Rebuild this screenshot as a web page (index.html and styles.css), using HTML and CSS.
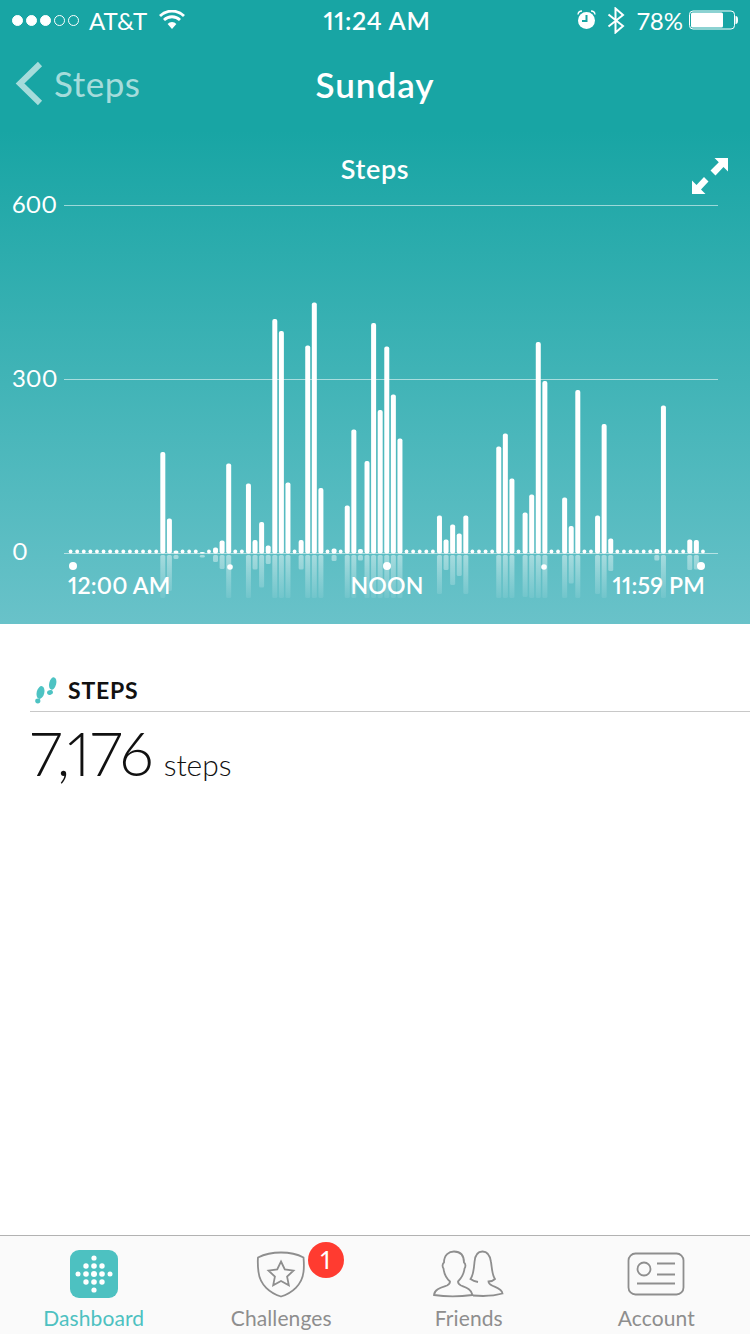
FILE: index.html
```html
<!DOCTYPE html>
<html>
<head>
    <title>Steps</title>
    <link rel="stylesheet" href="styles.css">
</head>
<body>
    <div class="page">
        <section class="hero">
            <div class="status">
                <div class="status-left">
                    <span class="signal">
                        <i class="dot on"></i><i class="dot on"></i><i class="dot on"></i><i class="dot"></i><i class="dot"></i>
                    </span>
                    <span class="carrier">AT&amp;T</span>
                    <svg class="wifi" width="26" height="20" viewBox="158 10 26 20">
                        <path d="M159 16A17 17 0 0 1 183 16" fill="none" stroke="#fff" stroke-width="2.8"/>
                        <path d="M163 20A11.5 11.5 0 0 1 179 20" fill="none" stroke="#fff" stroke-width="2.8"/>
                        <path d="M166.6 24A6 6 0 0 1 175.4 24L171 29Z" fill="#fff"/>
                    </svg>
                </div>
                <div class="clock">11:24 AM</div>
                <div class="status-right">
                    <svg width="22" height="22" viewBox="576 9 22 22">
                        <circle cx="586.5" cy="20.5" r="8.5" fill="#fff"/>
                        <path d="M586.5 15V21H582" fill="none" stroke="#18a5a4" stroke-width="2"/>
                        <path d="M578 14.5A4 4 0 0 1 582 11M591 11A4 4 0 0 1 595 14.5" fill="none" stroke="#fff" stroke-width="1.4"/>
                    </svg>
                    <svg class="bt" width="18" height="27" viewBox="607 7 18 27">
                        <path d="M608.5 14.5L623 26L615.5 32.5V8.5L623 15L608.5 26.5" fill="none" stroke="#fff" stroke-width="2"/>
                    </svg>
                    <span class="percent">78%</span>
                    <svg width="50" height="20" viewBox="690 10.5 50 20">
                        <rect x="690.5" y="11.5" width="45" height="18" rx="3.5" fill="none" stroke="#fff"/>
                        <rect x="692" y="13" width="32" height="15" rx="1.5" fill="#fff"/>
                        <path d="M736.5 16.5C738.5 16.5 739 18 739 20.5C739 23 738.5 24.5 736.5 24.5Z" fill="#fff"/>
                    </svg>
                </div>
            </div>
            <div class="nav">
                <div class="back">
                    <svg width="28" height="46" viewBox="15 61 28 46">
                        <path d="M40 65L20 84.500L40 104" fill="none" stroke="#a5dcdb" stroke-width="6"/>
                    </svg>
                    <span>Steps</span>
                </div>
                <h1>Sunday</h1>
            </div>
            <div class="chart-title">
                <span>Steps</span>
                <svg class="expand" width="38" height="38" viewBox="691 157 38 38">
                    <path d="M714.500 158H728V171.500L723.500 167L715.500 175.500L710.500 170.500L718.800 162.300Z" fill="#fff"/>
                    <path d="M692 180.500V194H705.500L701 189.500L708.500 181.500L704 177L696.500 185Z" fill="#fff"/>
                </svg>
            </div>
            <svg class="chart" width="750" height="434" viewBox="0 190 750 434">
                <defs>
                    <linearGradient id="fade" gradientUnits="userSpaceOnUse" x1="0" y1="555" x2="0" y2="598">
                        <stop offset="0" stop-color="#fff" stop-opacity=".45"/>
                        <stop offset="1" stop-color="#fff" stop-opacity=".08"/>
                    </linearGradient>
                </defs>
                <line class="grid" x1="64" y1="205.500" x2="718" y2="205.500"/>
                <line class="grid" x1="64" y1="379.500" x2="718" y2="379.500"/>
                <text class="axis" x="12" y="213">600</text>
                <text class="axis" x="12" y="387">300</text>
                <text class="axis" x="12" y="560">0</text>
                <g id="bars"></g>
                <line class="grid" x1="64" y1="553.500" x2="718" y2="553.500"/>
                <circle class="mark" cx="73" cy="566" r="4"/>
                <circle class="mark" cx="230" cy="567" r="2.800"/>
                <circle class="mark" cx="387" cy="566" r="4"/>
                <circle class="mark" cx="544" cy="567" r="2.800"/>
                <circle class="mark" cx="701" cy="566" r="4"/>
                <text class="time" x="68" y="594">12:00 AM</text>
                <text class="time middle" x="387" y="594">NOON</text>
                <text class="time end" x="705" y="594">11:59 PM</text>
            </svg>
        </section>

        <main class="summary">
            <div class="summary-head">
                <svg width="24" height="30" viewBox="35 676 24 30">
                    <g fill="#4dc3c3">
                        <ellipse cx="52.700" cy="683.500" rx="3.500" ry="6.300" transform="rotate(14 52.700 683.500)"/>
                        <ellipse cx="50" cy="692.500" rx="3" ry="2.300" transform="rotate(-20 50 692.500)"/>
                        <ellipse cx="40.500" cy="692.500" rx="3.800" ry="6.500" transform="rotate(14 40.500 692.500)"/>
                        <ellipse cx="37.800" cy="701" rx="2.600" ry="2.400"/>
                    </g>
                </svg>
                <span>STEPS</span>
            </div>
            <div class="total"><b>7,176</b> <span>steps</span></div>
        </main>

        <nav class="tabs">
            <a class="tab active">
                <svg width="80" height="50" viewBox="54 1250 80 50">
                    <rect x="70" y="1250" width="48" height="48" rx="9" fill="#4dc1c1"/>
                    <g fill="#fff">
                        <circle cx="94" cy="1258" r="2.600"/>
                        <circle cx="86" cy="1266" r="2.700"/><circle cx="94" cy="1266" r="2.800"/><circle cx="102" cy="1266" r="2.700"/>
                        <circle cx="78" cy="1274" r="2.500"/><circle cx="86" cy="1274" r="2.800"/><circle cx="94" cy="1274" r="3"/><circle cx="102" cy="1274" r="2.800"/><circle cx="110" cy="1274" r="2.500"/>
                        <circle cx="86" cy="1282" r="2.700"/><circle cx="94" cy="1282" r="2.800"/><circle cx="102" cy="1282" r="2.700"/>
                        <circle cx="94" cy="1290" r="2.600"/>
                    </g>
                </svg>
                <span>Dashboard</span>
            </a>
            <a class="tab">
                <svg width="80" height="50" viewBox="242 1250 80 50">
                    <path class="line" d="M259 1257.500C266 1254 274 1252.500 282 1252.500C290 1252.500 298 1254 304.500 1257.500C305 1263 305 1268 304.500 1272C303 1285 293 1293 282 1296.500C271 1293 261 1285 259.500 1272C259 1268 258.500 1263 259 1257.500Z"/>
                    <path class="line" d="M282 1261.500L285.800 1269.500L294.500 1270.600L288.100 1276.600L289.800 1285.200L282 1281L274.200 1285.200L275.900 1276.600L269.500 1270.600L278.200 1269.500Z"/>
                </svg>
                <span>Challenges</span>
                <b class="badge">1</b>
            </a>
            <a class="tab">
                <svg width="80" height="50" viewBox="429 1250 80 50">
                    <path class="line" d="M434 1295C434.500 1289 441 1287.500 447 1285.500C449 1284.500 450 1283 450 1281.500C446 1278 444 1273 443.500 1268.500C442 1266.500 442.500 1263.500 444 1262.500C444 1255 449 1251.500 454 1251.500C460 1251.500 464 1255 464 1262.500C465.500 1263.500 466 1266.500 464.500 1268.500C464 1273 461.500 1278 458 1281.500C458 1283 459 1284.500 461 1285.500C466 1287.500 471.500 1289 472.500 1295C460 1296.800 445 1296.800 434 1295Z"/>
                    <path class="line" d="M473 1295.500C484 1296.500 494 1296 502.500 1293.500C502 1289 496 1287.500 492 1285.500C490 1284.500 488.500 1283 488.500 1281.500C491 1281.500 493.500 1280.500 495 1279C492 1275 492 1268 491 1262C490 1255 487 1251.500 482.500 1251.500C478 1251.500 475 1255 474.500 1262C474 1268 473.500 1275 470.500 1279C472.500 1280.500 475 1281.500 478 1282"/>
                </svg>
                <span>Friends</span>
            </a>
            <a class="tab">
                <svg width="80" height="50" viewBox="616 1250 80 50">
                    <rect class="line" x="628.500" y="1253.500" width="55" height="41" rx="7"/>
                    <circle class="line" cx="644" cy="1269" r="6.500"/>
                    <path class="line" d="M657 1263.500H675M657 1274.500H675M637 1283.500H675"/>
                </svg>
                <span>Account</span>
            </a>
        </nav>
    </div>
    <script src="app.js"></script>
</body>
</html>
```

FILE: styles.css
```css
* {
    box-sizing: border-box;
}
body {
    margin: 0;
    font-family: Lato, "Open Sans", sans-serif;
    font-variant-numeric: proportional-nums;
    background: #fff;
}
.page {
    width: 750px;
    height: 1334px;
    display: flex;
    flex-direction: column;
    overflow: hidden;
}
.hero {
    height: 624px;
    flex: none;
    color: #fff;
    background: linear-gradient(#18a5a4 0, #18a5a4 130px, #69c2c9 624px);
}
.hero svg {
    display: block;
}
.status {
    height: 40px;
    position: relative;
    display: flex;
    align-items: center;
    justify-content: space-between;
    padding: 0 11px 0 12px;
    font-size: 24px;
}
.status-left, .status-right {
    display: flex;
    align-items: center;
}
.signal {
    display: flex;
    gap: 3px;
    margin-right: 10px;
}
.dot {
    width: 11px;
    height: 11px;
    border-radius: 50%;
    border: 1px solid #fff;
}
.dot.on {
    background: #fff;
}
.wifi {
    margin-left: 12px;
}
.clock {
    position: absolute;
    left: 0;
    right: 0;
    text-align: center;
    padding-left: 4px;
    font-weight: 600;
    font-size: 25px;
    letter-spacing: .7px;
}
.bt {
    margin: 0 12px 0 9px;
}
.percent {
    margin-right: 6px;
}
.nav {
    height: 88px;
    position: relative;
    display: flex;
    align-items: center;
    justify-content: center;
}
.back {
    position: absolute;
    left: 15px;
    top: 20px;
    display: flex;
    align-items: center;
    gap: 11px;
    font-size: 35px;
    letter-spacing: .5px;
    color: #a5dcdb;
}
.nav h1 {
    margin: 0;
    font-size: 35px;
    font-weight: 600;
    letter-spacing: 1px;
    line-height: 86px;
}
.chart-title {
    height: 62px;
    position: relative;
    text-align: center;
    font-size: 27px;
    font-weight: 600;
    letter-spacing: .6px;
    line-height: 82px;
}
.expand {
    position: absolute;
    left: 691px;
    top: 29px;
}
.grid {
    stroke: #fff;
    stroke-opacity: .55;
    stroke-width: 1;
}
.axis {
    fill: #fff;
    font-size: 24px;
}
.time {
    fill: #fff;
    font-size: 23px;
    font-weight: 600;
    letter-spacing: .2px;
}
.middle {
    text-anchor: middle;
}
.end {
    text-anchor: end;
}
.mark, .bar {
    fill: #fff;
}
.mirror {
    fill: url(#fade);
}
.summary {
    flex: 1;
    padding: 50px 0 0 30px;
}
.summary-head {
    height: 38px;
    display: flex;
    align-items: flex-start;
    border-bottom: 1px solid #c8c8c8;
    font-size: 23px;
    font-weight: 700;
    letter-spacing: .8px;
    color: #111;
}
.summary-head svg {
    margin: 2px 9px 0 5px;
}
.summary-head span {
    line-height: 32px;
}
.total {
    font-size: 30px;
    font-weight: 300;
    color: #111;
    line-height: 82px;
}
.total b {
    font-size: 61px;
    font-weight: 300;
    margin-right: 2px;
}
.tabs {
    height: 99px;
    flex: none;
    display: flex;
    background: #fafafa;
    border-top: 1px solid #b2b2b2;
}
.tab {
    flex: 1;
    position: relative;
    display: flex;
    flex-direction: column;
    align-items: center;
    padding-top: 14px;
    font-size: 21px;
    letter-spacing: .1px;
    color: #8e8e8e;
}
.tab span {
    margin-top: 5px;
}
.tab.active {
    color: #4dc1c1;
}
.line {
    fill: none;
    stroke: #8e8e8e;
    stroke-width: 1.800;
}
.badge {
    position: absolute;
    left: 120px;
    top: 6px;
    width: 36px;
    height: 36px;
    border-radius: 50%;
    background: #ff3b30;
    color: #fff;
    font-size: 25px;
    font-weight: 400;
    line-height: 35px;
    text-align: center;
}
```

FILE: app.js
```js
// alturas en px sobre la linea base, lo que no esta aqui es un punto
const alturas = {
    14: 101.5, 15: 35, 16: 3, 20: 1.5, 22: 6, 23: 13, 24: 90, 27: 70, 28: 13.5, 29: 31.5,
    30: 8, 31: 234.5, 32: 222.5, 33: 71, 35: 13.5, 36: 208, 37: 251, 38: 65.5, 40: 5,
    42: 48, 43: 124, 44: 4.5, 45: 92.5, 46: 230.5, 47: 143.5, 48: 207, 49: 159, 50: 115,
    56: 38, 57: 14, 58: 29, 59: 20, 60: 38, 65: 107, 66: 120, 67: 75, 69: 41, 70: 59,
    71: 211.5, 72: 172.5, 75: 56, 76: 27.5, 77: 163.5, 80: 38, 81: 129.5, 82: 15,
    89: 4.5, 90: 148, 94: 14, 95: 13.5
};
const base = 553.5;
const paso = 6.587;
let html = '';
for (let i = 0; i < 97; i++) {
    const x = 70.6 + i * paso;
    const h = alturas[i];
    if (h) {
        html += `<rect class="bar" x="${x - 2.5}" y="${base - h}" width="5" height="${h}" rx="2"/>`;
        const r = Math.min(h + 1, 598 - 555);
        html += `<rect class="mirror" x="${x - 2.5}" y="555" width="5" height="${r}" rx="1.5"/>`;
    } else {
        html += `<circle class="bar" cx="${x}" cy="551.5" r="1.9"/>`;
    }
}
document.getElementById('bars').innerHTML = html;
```
